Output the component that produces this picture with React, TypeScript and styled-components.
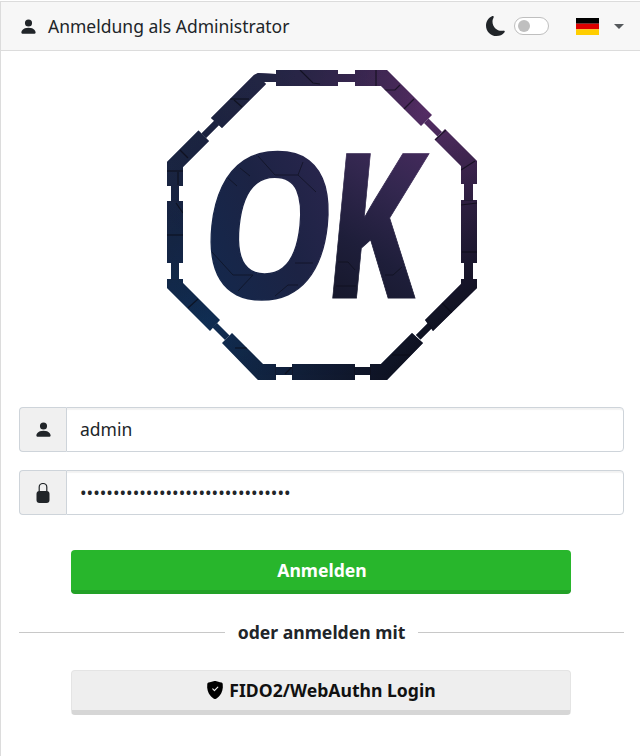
import React from "react";
import styled, { createGlobalStyle } from "styled-components";
import { BsPersonFill, BsMoonFill, BsShieldFillCheck } from "react-icons/bs";

const Global = createGlobalStyle`
  html, body { margin: 0; padding: 0; background: #fff; }
  body { font-family: "Noto Sans", "Open Sans", sans-serif; color: #212529; overflow: hidden; }
  * { box-sizing: border-box; }
`;

const Card = styled.main`
  margin-top: 1px;
  min-height: 755px;
  border-top: 1px solid #dcdcdc;
  border-left: 1px solid #dcdcdc;
`;

const Header = styled.header`
  height: 49px;
  display: flex;
  align-items: center;
  padding-left: 18px;
  background: #f7f7f7;
  border-bottom: 1px solid #dcdcdc;
`;

const HeaderIcon = styled(BsPersonFill)`
  width: 19px;
  height: 19px;
  color: #212529;
`;

const Title = styled.h1`
  margin: 0 0 0 10px;
  font-size: 17.5px;
  line-height: 24px;
  font-weight: 400;
  flex: 1;
`;

const Moon = styled(BsMoonFill)`
  width: 20px;
  height: 20px;
  color: #212529;
`;

const Toggle = styled.span`
  display: flex;
  align-items: center;
  width: 35px;
  height: 18px;
  margin-left: 8px;
  padding-left: 3px;
  background: #fff;
  border: 1px solid #bfbfbf;
  border-radius: 9px;
`;

const Knob = styled.span`
  width: 12px;
  height: 12px;
  border-radius: 50%;
  background: #bfbfbf;
`;

const Flag = styled.svg`
  width: 23px;
  height: 17px;
  margin-left: 27px;
`;

const Caret = styled.span`
  width: 0;
  height: 0;
  margin-left: 15px;
  margin-right: 16px;
  border-top: 5px solid #55595c;
  border-left: 5px solid transparent;
  border-right: 5px solid transparent;
`;

const LogoWrap = styled.div`
  padding: 19px 0 0 166px;
  height: 356px;
`;

const Logo = styled.svg`
  display: block;
  width: 310px;
  height: 310px;
`;

const Form = styled.form`
  display: flex;
  flex-direction: column;
  padding: 0 16px 0 18px;
`;

const InputGroup = styled.label`
  display: flex;
  height: 45px;
  margin-bottom: 18px;
`;

const Addon = styled.span`
  flex: 0 0 47px;
  display: flex;
  align-items: center;
  justify-content: center;
  background: #f0f0f0;
  border: 1px solid #ced4da;
  border-right: 0;
  border-radius: 4px 0 0 4px;
`;

const AddonPerson = styled(BsPersonFill)`
  width: 19px;
  height: 19px;
  color: #212529;
`;

const LockIcon = styled.svg`
  width: 14px;
  height: 20px;
`;

const Field = styled.input`
  flex: 1;
  min-width: 0;
  height: 45px;
  padding: 0 13px 1px;
  border: 1px solid #ced4da;
  border-radius: 0 4px 4px 0;
  font-family: inherit;
  font-size: 17.5px;
  color: #212529;
  outline: none;
  box-shadow: inset 0 3px 1px -1px rgba(0, 0, 0, 0.05);
`;

const ButtonRow = styled.div`
  padding: 0 53px 0 52px;
`;

const Primary = styled.button`
  display: block;
  width: 100%;
  height: 44px;
  margin-top: 17px;
  padding: 0 0 0 2px;
  border: 0;
  border-bottom: 4px solid #23a127;
  border-radius: 4px;
  background: #28b62c;
  color: #fff;
  font-family: inherit;
  font-size: 17.6px;
  font-weight: 700;
`;

const Divider = styled.div`
  display: flex;
  align-items: center;
  gap: 13px;
  height: 24px;
  margin-top: 26px;
  font-size: 17.6px;
  font-weight: 700;
  &::before, &::after {
    content: "";
    flex: 1;
    height: 1px;
    background: #c8c8c8;
  }
`;

const Secondary = styled.button`
  display: flex;
  align-items: center;
  justify-content: center;
  gap: 5px;
  width: 100%;
  height: 45px;
  margin-top: 26px;
  padding: 0 0 2px;
  border: 1px solid #e4e4e4;
  border-bottom: 5px solid #d6d6d6;
  border-radius: 4px;
  background: #eeeeee;
  color: #111;
  font-family: inherit;
  font-size: 17.6px;
  font-weight: 700;
`;

const ShieldIcon = styled(BsShieldFillCheck)`
  width: 18px;
  height: 18px;
  color: #000;
`;

const blocks = [
  "276,70 338,70 338,86 276,86",
  "338,74 355,74 355,82 338,82",
  "355,70 387,70 432,115 421,126 381,86 355,86",
  "424,123 428.5,118.5 442,132 437.5,136.5",
  "445,129 477,161 477,184 461,184 461,166 434.5,139.5",
  "464,184 473,184 473,201 464,201",
  "461,200 477,200 477,263 461,263",
  "464,263 473,263 473,279 464,279",
  "425,320 461,284 461,279 477,279 477,288 433,331",
  "416,335 420.5,339.5 432.5,327.5 428,323",
  "370,364 381,364 412,333 423,343 387,380 370,380",
  "354,367 371,367 371,375 354,375",
  "292,364 355,364 355,380 292,380",
  "275,367 293,367 293,375 275,375",
  "222,343 232,333 263,364 276,364 276,380 258,380",
  "212.5,327.5 217,323 229.5,335.5 225,340",
  "167,279 183,279 183,283 220,320 210,331 167,288",
  "171,263 179,263 179,280 171,280",
  "167,201 183,201 183,263 167,263",
  "171,185 179,185 179,202 171,202",
  "167,162 198.5,130.5 209,141 183,167 183,186 167,186",
  "214.5,120.5 201.5,133.5 206,138 219,125",
  "254,75 258,73 276,74 276,82 264,82 266,84 222,128 211,118",
];

const grooves = [
  "300,70 313,83 320,84",
  "376,70 376,86",
  "383,90 395,90 400,85",
  "403,110 414,99",
  "435,140 446,130",
  "461,170 475,161",
  "461,205 477,203",
  "462,252 477,252",
  "442,303 452,313",
  "392,355 410,355",
  "188,308 198,299",
  "235,348 247,348",
  "285,374 292,367",
  "167,235 183,235",
  "230,99 249,99",
  "234,100 242,107",
  "180,150 188,158",
  "167,171 183,171",
  "178,172 178,185",
  "176,203 183,213",
];

const letterGrooves = [
  "258,156 275,175 298,175 303,162",
  "298,175 316,192",
  "240,168 250,176",
  "228,178 237,186",
  "212,252 233,275 253,275",
  "253,275 238,291",
  "275,296 288,285 298,285",
  "295,263 313,263",
  "338,262 348,262 355,270",
  "336,286 356,286",
  "385,275 393,275 402,267",
];

export default function App() {
  return (
    <Card>
      <Global />
      <Header>
        <HeaderIcon />
        <Title>Anmeldung als Administrator</Title>
        <Moon />
        <Toggle><Knob /></Toggle>
        <Flag viewBox="0 0 23 17">
          <rect width="23" height="5.7" fill="#000" />
          <rect y="5.7" width="23" height="5.6" fill="#d00" />
          <rect y="11.3" width="23" height="5.7" fill="#ffce00" />
        </Flag>
        <Caret />
      </Header>
      <LogoWrap>
        <Logo viewBox="167 70 310 310">
          <defs>
            <linearGradient id="cross" gradientUnits="userSpaceOnUse" x1="450" y1="90" x2="190" y2="360">
              <stop offset="0" stopColor="#5f2f6b" />
              <stop offset="0.28" stopColor="#3d2a55" />
              <stop offset="0.5" stopColor="#1e2340" />
              <stop offset="0.75" stopColor="#13294d" />
              <stop offset="1" stopColor="#0f3258" />
            </linearGradient>
            <linearGradient id="shade" gradientUnits="userSpaceOnUse" x1="220" y1="120" x2="430" y2="340">
              <stop offset="0" stopColor="#1c2440" stopOpacity="0.75" />
              <stop offset="0.45" stopColor="#15172a" stopOpacity="0" />
              <stop offset="1" stopColor="#0d0f1c" stopOpacity="0.85" />
            </linearGradient>
            <linearGradient id="letterO" x1="0.9" y1="0.05" x2="0.2" y2="0.95">
              <stop offset="0" stopColor="#2e2650" />
              <stop offset="0.5" stopColor="#1c2344" />
              <stop offset="1" stopColor="#12294e" />
            </linearGradient>
            <linearGradient id="letterK" x1="0.6" y1="0.1" x2="0.45" y2="0.85">
              <stop offset="0" stopColor="#4a2b60" />
              <stop offset="0.35" stopColor="#33274f" />
              <stop offset="0.7" stopColor="#1e1e3a" />
              <stop offset="1" stopColor="#16182c" />
            </linearGradient>
            <clipPath id="ring">
              {blocks.map((p) => <polygon key={p} points={p} />)}
            </clipPath>
          </defs>
          {["url(#cross)", "url(#shade)"].map((fill) => (
            <g key={fill} fill={fill}>
              {blocks.map((p) => <polygon key={p} points={p} />)}
            </g>
          ))}
          <text transform="translate(195 298) skewX(-6) scale(0.84 1)" fontFamily="'Noto Sans', sans-serif" fontSize="202" fontWeight="700" letterSpacing="-16" fill="url(#letterO)" stroke="url(#letterO)" strokeWidth="1.5">O</text>
          <text transform="translate(321 298) skewX(-5.5) scale(0.69 1)" fontFamily="'Noto Sans', sans-serif" fontSize="202" fontWeight="800" fill="url(#letterK)" stroke="url(#letterK)" strokeWidth="1">K</text>
          <g fill="none" stroke="#0a0b14" strokeWidth="1.2" opacity="0.7" clipPath="url(#ring)">
            {grooves.map((p) => <polyline key={p} points={p} />)}
          </g>
          <g fill="none" stroke="#0a0b14" strokeWidth="1" opacity="0.55">
            {letterGrooves.map((p) => <polyline key={p} points={p} />)}
          </g>
        </Logo>
      </LogoWrap>
      <Form>
        <InputGroup>
          <Addon><AddonPerson /></Addon>
          <Field type="text" defaultValue="admin" />
        </InputGroup>
        <InputGroup>
          <Addon>
            <LockIcon viewBox="0 0 14 20">
              <path d="M3.2 9V4a3.8 3.5 0 0 1 7.6 0V9" fill="none" stroke="#212529" strokeWidth="1.2" />
              <rect x="0.5" y="8" width="13" height="12" rx="3" fill="#212529" />
            </LockIcon>
          </Addon>
          <Field type="password" defaultValue="12345678901234567890123456789012" />
        </InputGroup>
        <ButtonRow>
          <Primary type="button">Anmelden</Primary>
        </ButtonRow>
        <Divider>oder anmelden mit</Divider>
        <ButtonRow>
          <Secondary type="button"><ShieldIcon />FIDO2/WebAuthn Login</Secondary>
        </ButtonRow>
      </Form>
    </Card>
  );
}
